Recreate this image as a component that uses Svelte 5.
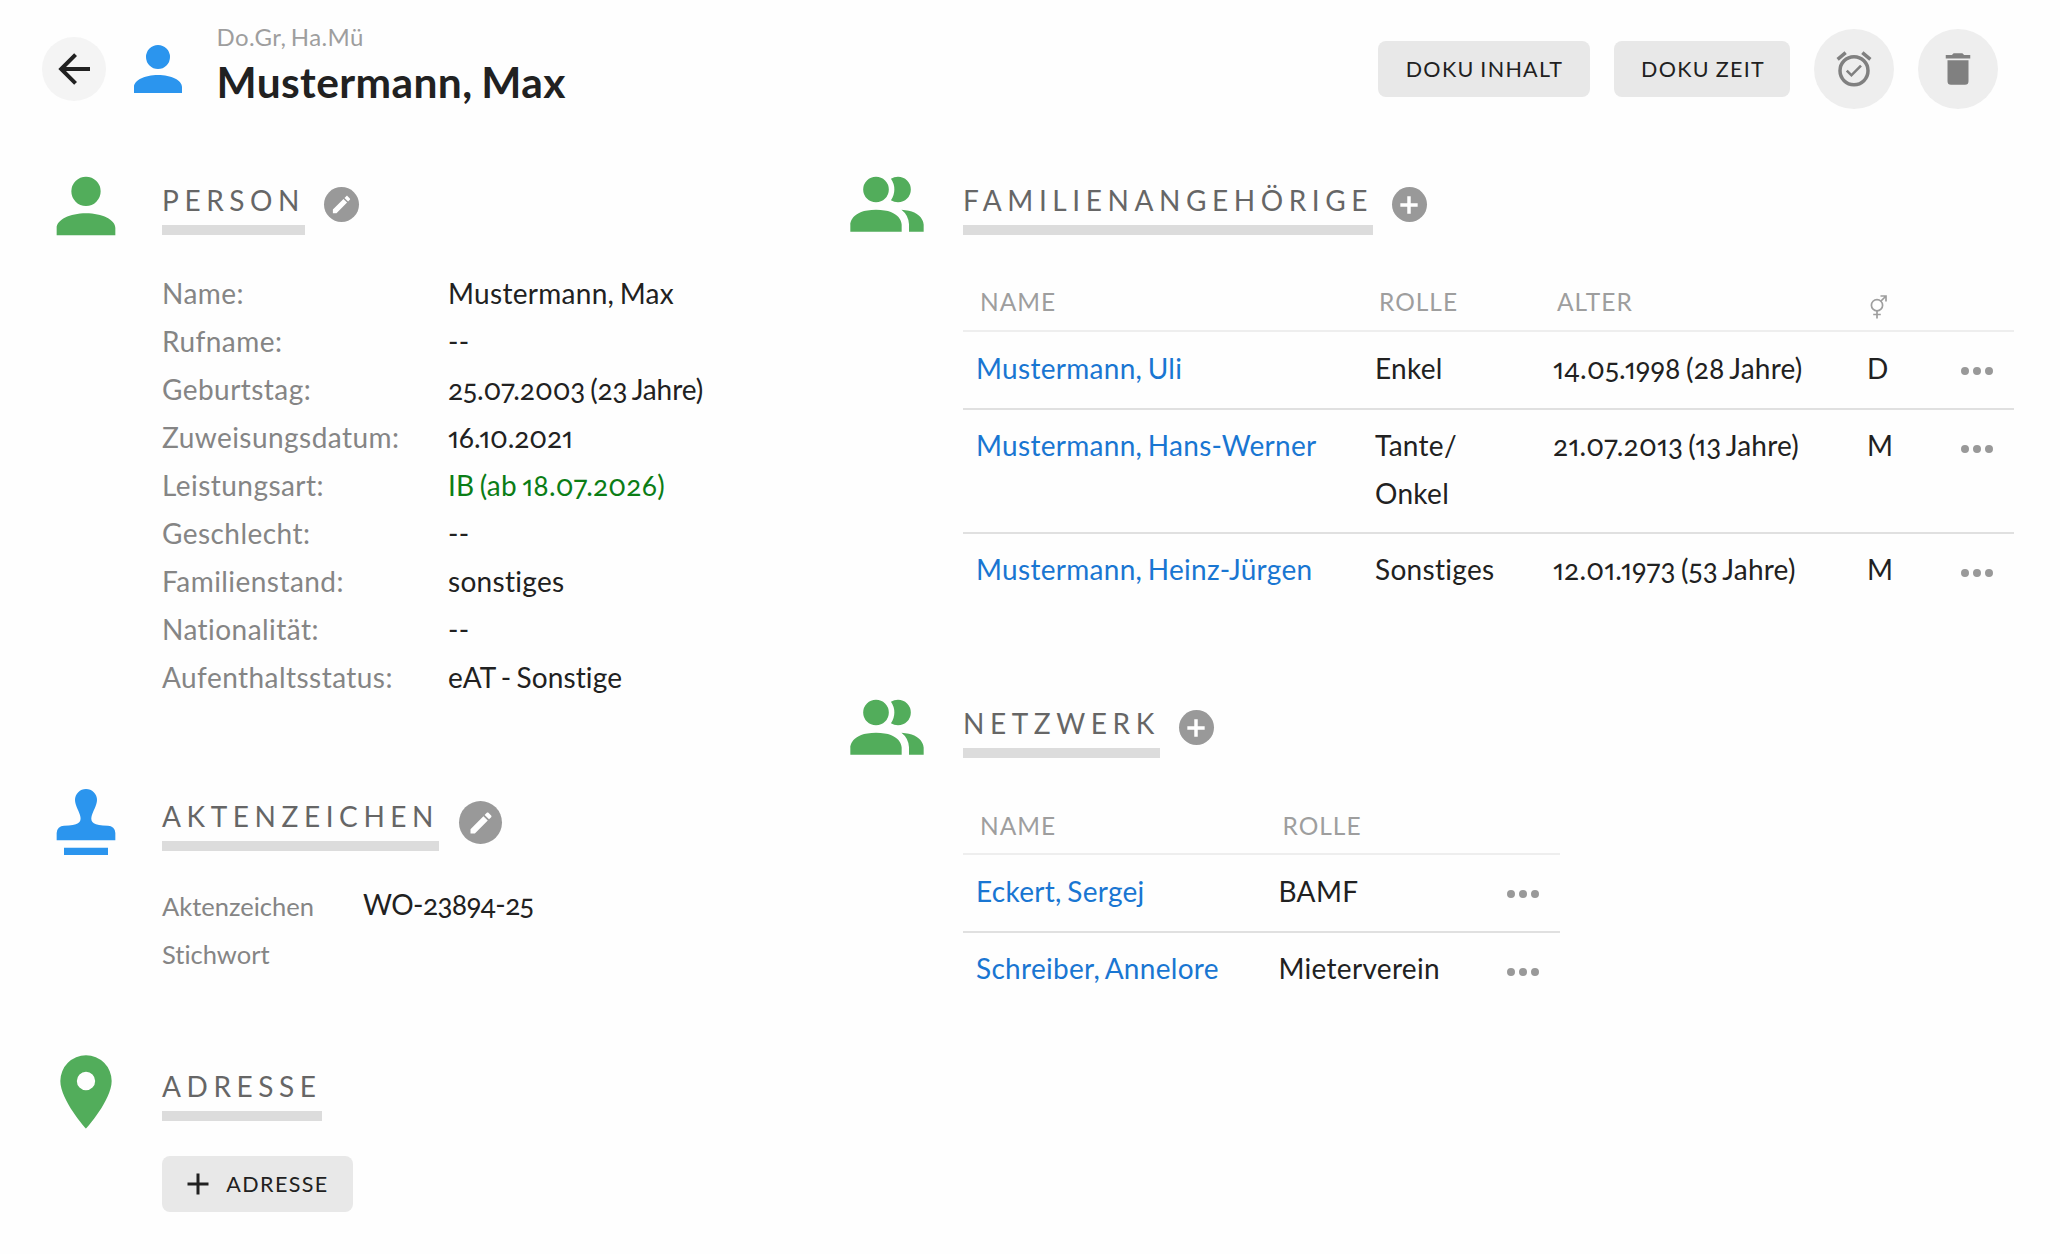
<script>
  const facts = [
    ['Name:', 'Mustermann, Max'],
    ['Rufname:', '--'],
    ['Geburtstag:', '25.07.2003 (23 Jahre)', 'date'],
    ['Zuweisungsdatum:', '16.10.2021', 'date'],
    ['Leistungsart:', 'IB (ab 18.07.2026)', 'ok'],
    ['Geschlecht:', '--'],
    ['Familienstand:', 'sonstiges'],
    ['Nationalität:', '--'],
    ['Aufenthaltsstatus:', 'eAT - Sonstige', 'status'],
  ];
  const family = [
    ['Mustermann, Uli', 'Enkel', '14.05.1998 (28 Jahre)', 'D'],
    ['Mustermann, Hans-Werner', 'Tante/ Onkel', '21.07.2013 (13 Jahre)', 'M'],
    ['Mustermann, Heinz-Jürgen', 'Sonstiges', '12.01.1973 (53 Jahre)', 'M'],
  ];
  const network = [
    ['Eckert, Sergej', 'BAMF'],
    ['Schreiber, Annelore', 'Mieterverein'],
  ];
  const icons = {
    back: 'M20 11v2H8l5.5 5.5-1.42 1.42L4.16 12l7.92-7.92L13.5 5.5 8 11h12z',
    person: 'M12 4a4 4 0 1 1 0 8 4 4 0 0 1 0-8m0 10c4.42 0 8 1.79 8 4v2H4v-2c0-2.21 3.58-4 8-4z',
    people:
      'M16 17v2H2v-2s0-4 7-4 7 4 7 4m-3.5-9.5A3.5 3.5 0 1 0 9 11a3.5 3.5 0 0 0 3.5-3.5m3.44 5.5A5.32 5.32 0 0 1 18 17v2h4v-2s0-3.63-6.06-4M15 4a3.39 3.39 0 0 0-1.93.59 5 5 0 0 1 0 5.82A3.39 3.39 0 0 0 15 11a3.5 3.5 0 0 0 0-7z',
    stamp:
      'M12 3a3 3 0 0 0-3 3c0 3 5 7-3 7a2 2 0 0 0-2 2v2h16v-2a2 2 0 0 0-2-2c-8 0-3-4-3-7a3 3 0 0 0-3-3M6 19v2h12v-2H6z',
    pin: 'M12 11.5A2.5 2.5 0 0 1 9.5 9 2.5 2.5 0 0 1 12 6.5 2.5 2.5 0 0 1 14.5 9a2.5 2.5 0 0 1-2.5 2.5M12 2a7 7 0 0 0-7 7c0 5.25 7 13 7 13s7-7.75 7-13a7 7 0 0 0-7-7z',
    pencil:
      'M20.71 7.04c.39-.39.39-1.04 0-1.41l-2.34-2.34c-.37-.39-1.02-.39-1.41 0l-1.84 1.83 3.75 3.75M3 17.25V21h3.75L17.81 9.93l-3.75-3.75L3 17.25z',
    plus: 'M19 13h-6v6h-2v-6H5v-2h6V5h2v6h6v2z',
    boldPlus: 'M20 13.6h-6.4V20h-3.2v-6.4H4v-3.2h6.4V4h3.2v6.4H20v3.2z',
    alarm:
      'M10.54 14.53L8.41 12.4l-1.06 1.06 3.18 3.18 6-6-1.06-1.06-4.93 4.95M12 20a7 7 0 0 1-7-7 7 7 0 0 1 7-7 7 7 0 0 1 7 7 7 7 0 0 1-7 7m0-16a9 9 0 0 0-9 9 9 9 0 0 0 9 9 9 9 0 0 0 9-9 9 9 0 0 0-9-9m-4.12-.61L6.6 1.86 2 5.71l1.29 1.53 4.59-3.85M22 5.72l-4.6-3.86-1.29 1.53 4.6 3.86L22 5.72z',
    trash: 'M19 4h-3.5l-1-1h-5l-1 1H5v2h14M6 19a2 2 0 0 0 2 2h8a2 2 0 0 0 2-2V7H6v12z',
    more: 'M16 12a2 2 0 1 1 4 0 2 2 0 0 1-4 0m-6 0a2 2 0 1 1 4 0 2 2 0 0 1-4 0m-6 0a2 2 0 1 1 4 0 2 2 0 0 1-4 0z',
  };
</script>

{#snippet icon(name)}
  <svg viewBox="0 0 24 24" aria-hidden="true"><path d={icons[name]} /></svg>
{/snippet}

{#snippet title(text, action, big)}
  <div class="title">
    <h2>{text}</h2>
    {#if action}
      <button class="round {action}" class:big aria-label={text}>{@render icon(action)}</button>
    {/if}
  </div>
{/snippet}

<div class="page">
  <header>
    <button class="back" aria-label="Zurück">{@render icon('back')}</button>
    <div class="avatar">{@render icon('person')}</div>
    <div class="who">
      <div class="team">Do.Gr, Ha.Mü</div>
      <h1>Mustermann, Max</h1>
    </div>
    <button class="btn inhalt">DOKU INHALT</button>
    <button class="btn zeit">DOKU ZEIT</button>
    <button class="tool" aria-label="Erinnerung">{@render icon('alarm')}</button>
    <button class="tool" aria-label="Löschen">{@render icon('trash')}</button>
  </header>

  <main>
    <div class="column">
      <section class="person">
        <div class="mark">{@render icon('person')}</div>
        <div>
          {@render title('PERSON', 'pencil', false)}
          <dl class="facts">
            {#each facts as [label, value, kind]}
              <dt>{label}</dt>
              <dd class:ok={kind === 'ok'} class:date={kind === 'date'} class:status={kind === 'status'}>{value}</dd>
            {/each}
          </dl>
        </div>
      </section>

      <section class="files">
        <div class="mark blue">{@render icon('stamp')}</div>
        <div>
          {@render title('AKTENZEICHEN', 'pencil', true)}
          <dl class="refs">
            <dt>Aktenzeichen</dt>
            <dd class="number">WO-23894-25</dd>
            <dt>Stichwort</dt>
            <dd></dd>
          </dl>
        </div>
      </section>

      <section>
        <div class="mark">{@render icon('pin')}</div>
        <div>
          {@render title('ADRESSE')}
          <button class="btn add">{@render icon('plus')}<span>ADRESSE</span></button>
        </div>
      </section>
    </div>

    <div class="column">
      <section class="family">
        <div class="mark">{@render icon('people')}</div>
        <div>
          {@render title('FAMILIENANGEHÖRIGE', 'boldPlus', false)}
          <div class="table wide">
            <div class="head">
              <span>NAME</span><span>ROLLE</span><span>ALTER</span>
              <span class="sex">
                <svg viewBox="0 0 17 24"><path d="M10.5 6.5L15.5 1.5M10.5 1h5.5v5.5M7 16v7.5M3.2 19.5h7.6" /><circle cx="7" cy="10.2" r="5.6" /></svg>
              </span>
            </div>
            {#each family as [name, role, age, sex]}
              <div class="row">
                <a href="#person">{name}</a>
                <span class="role">{role}</span>
                <span class="age">{age}</span>
                <span>{sex}</span>
                <button class="more" aria-label="Mehr">{@render icon('more')}</button>
              </div>
            {/each}
          </div>
        </div>
      </section>

      <section>
        <div class="mark">{@render icon('people')}</div>
        <div>
          {@render title('NETZWERK', 'boldPlus', false)}
          <div class="table narrow">
            <div class="head"><span>NAME</span><span>ROLLE</span></div>
            {#each network as [name, role]}
              <div class="row">
                <a href="#person">{name}</a>
                <span>{role}</span>
                <button class="more" aria-label="Mehr">{@render icon('more')}</button>
              </div>
            {/each}
          </div>
        </div>
      </section>
    </div>
  </main>
</div>

<style>
  :global(body) {
    margin: 0;
    background: #fefefe;
  }
  .page {
    box-sizing: border-box;
    width: 2060px;
    height: 1254px;
    overflow: hidden;
    background: #fefefe;
    color: #212121;
    font: 28px/48px Lato, 'Open Sans', sans-serif;
    font-variant-numeric: oldstyle-nums proportional-nums;
    font-variant-ligatures: none;
    letter-spacing: 0.3px;
    word-spacing: -2px;
  }
  button {
    border: 0;
    padding: 0;
    font: inherit;
    color: inherit;
    display: flex;
    align-items: center;
    justify-content: center;
    flex: none;
  }
  svg {
    display: block;
    width: 100%;
    height: 100%;
    fill: currentColor;
  }
  h1,
  h2,
  dl,
  dd {
    margin: 0;
  }
  header {
    box-sizing: border-box;
    height: 162px;
    padding: 0 62px 24px 42px;
    display: flex;
    align-items: center;
  }
  .back {
    width: 64px;
    height: 64px;
    border-radius: 50%;
    background: #f4f4f4;
  }
  .back svg {
    width: 48px;
    height: 48px;
  }
  .avatar {
    width: 72px;
    height: 72px;
    margin: 0 23px 0 15.5px;
    color: #2b95ee;
  }
  .who {
    flex: 1;
    padding-bottom: 10px;
    white-space: nowrap;
  }
  .team {
    font-size: 24px;
    line-height: 36px;
    letter-spacing: 0.4px;
    color: #9e9e9e;
  }
  h1 {
    font-size: 42.5px;
    line-height: 54px;
    font-weight: 700;
    letter-spacing: 0.4px;
  }
  .btn {
    box-sizing: border-box;
    height: 56px;
    border-radius: 8px;
    background: #e8e8e8;
    font-size: 21.5px;
    letter-spacing: 1.3px;
    word-spacing: -1px;
  }
  .inhalt {
    width: 212px;
    padding: 0 0 1px 1px;
  }
  .zeit {
    width: 176px;
    margin-left: 24px;
    padding: 0 0 1px 2px;
  }
  .tool {
    width: 80px;
    height: 80px;
    margin-left: 24px;
    border-radius: 50%;
    background: #eee;
    color: #808080;
  }
  .tool svg {
    width: 42px;
    height: 42px;
  }
  main {
    display: grid;
    grid-template-columns: 801px 1fr;
    padding: 0 46px 0 42px;
  }
  section {
    display: grid;
    grid-template-columns: 88px 1fr;
    column-gap: 32px;
  }
  .person {
    height: 616px;
  }
  .files {
    height: 270px;
  }
  .family {
    height: 523px;
  }
  .mark {
    width: 88px;
    height: 88px;
    color: #52ad5b;
  }
  .blue {
    color: #2b95ee;
  }
  .title {
    display: flex;
    margin-top: 14px;
    height: 59px;
  }
  h2 {
    box-sizing: border-box;
    height: 59px;
    border-bottom: 10px solid #dcdcdc;
    font-size: 28px;
    line-height: 48px;
    font-weight: 400;
    letter-spacing: 5.58px;
    color: #666;
    white-space: nowrap;
  }
  .round {
    width: 35px;
    height: 35px;
    margin: 11px 0 0 19px;
    border-radius: 50%;
    background: #999;
    color: #fff;
  }
  .round svg {
    width: 23px;
    height: 23px;
  }
  .boldPlus svg {
    width: 26px;
    height: 26px;
  }
  .round.big {
    width: 43px;
    height: 43px;
    margin: 9px 0 0 20px;
  }
  .round.big svg {
    width: 28px;
    height: 28px;
  }
  dl {
    display: grid;
    grid-auto-rows: 48px;
    white-space: nowrap;
  }
  dt {
    color: #858585;
    letter-spacing: 0.45px;
  }
  .facts {
    grid-template-columns: 286px 1fr;
    padding-top: 34px;
  }
  .ok {
    color: #0b7d16;
    letter-spacing: 0.2px;
  }
  .date {
    letter-spacing: -0.1px;
  }
  .status {
    letter-spacing: 0.1px;
  }
  .refs {
    grid-template-columns: 201px 1fr;
    padding-top: 29px;
  }
  .refs dt {
    font-size: 25.5px;
    line-height: 52px;
    letter-spacing: 0;
  }
  .number {
    letter-spacing: -0.55px;
  }
  .add {
    width: 191px;
    margin-top: 35px;
    padding-right: 6px;
    gap: 10px;
    letter-spacing: 1.4px;
  }
  .add svg {
    width: 36px;
    height: 36px;
  }
  .wide {
    width: 1051px;
    --cols: 399px 178px 314px 86px 48px;
  }
  .narrow {
    width: 597px;
    --cols: 302.5px 220.5px 48px;
  }
  .head,
  .row {
    display: grid;
    grid-template-columns: var(--cols);
    padding-left: 13px;
  }
  .head {
    box-sizing: border-box;
    height: 97px;
    padding: 43px 0 0 17px;
    border-bottom: 2px solid #eee;
    font-size: 24.5px;
    letter-spacing: 1px;
    color: #9e9e9e;
  }
  .narrow .head {
    padding-top: 44px;
  }
  .sex svg {
    width: 17px;
    height: 24px;
    margin-top: 17px;
    margin-left: -1px;
    fill: none;
    stroke: currentColor;
    stroke-width: 1.7;
  }
  .row {
    padding-top: 11px;
    padding-bottom: 17px;
    border-bottom: 2px solid #e0e0e0;
  }
  .head + .row {
    padding-top: 12px;
    padding-bottom: 16px;
  }
  .row:last-child {
    border-bottom: 0;
  }
  .role {
    width: 125px;
    margin-bottom: -2px;
  }
  .row a {
    color: #1976d2;
    text-decoration: none;
  }
  .row a,
  .age {
    white-space: nowrap;
  }
  .age {
    letter-spacing: 0.2px;
  }
  .more {
    width: 48px;
    height: 48px;
    margin: 4px 0 -4px;
    background: none;
    color: #999;
  }
  .head + .row .more {
    margin: 3px 0 -3px;
  }
</style>
